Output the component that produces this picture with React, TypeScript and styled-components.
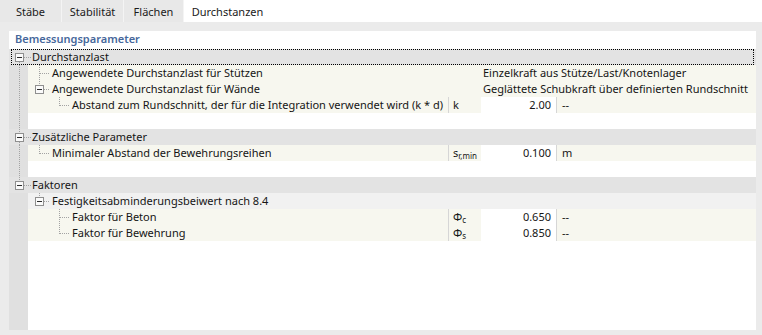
import React from 'react';
import styled, { createGlobalStyle, css } from 'styled-components';

const GlobalStyle = createGlobalStyle`
    html, body {
        margin: 0;
        padding: 0;
        background: #ffffff;
    }
    body {
        font-family: "Noto Sans", "DejaVu Sans", sans-serif;
        font-size: 11px;
        color: #151515;
    }
`;

const Window = styled.div`
    width: 762px;
    height: 335px;
    display: flex;
    flex-direction: column;
    background: #ffffff;
    overflow: hidden;
`;

const TabBar = styled.div`
    display: flex;
    height: 22px;
    flex-shrink: 0;
`;

const Tab = styled.div<{ $active?: boolean; $width: number }>`
    box-sizing: border-box;
    width: ${props => props.$width}px;
    display: flex;
    align-items: center;
    justify-content: center;
    background: ${props => (props.$active ? '#ffffff' : '#e8e8e8')};
    border-right: 1px solid ${props => (props.$active ? '#ffffff' : '#f4f4f4')};
    color: #1a1a1a;
    white-space: nowrap;
`;

const Body = styled.div`
    flex: 1;
    min-height: 0;
    display: flex;
    background: #ebebeb;
    padding: 9px 6px 5px 9px;
`;

const Panel = styled.div`
    flex: 1;
    display: flex;
    flex-direction: column;
    background: #ffffff;
`;

const SectionTitle = styled.div`
    height: 16px;
    line-height: 16px;
    margin-bottom: 2px;
    padding-left: 6px;
    color: #46679b;
    font-weight: 600;
`;

const Tree = styled.div`
    flex: 1;
    background: linear-gradient(to right, #e0e0e0 19px, transparent 19px);
`;

const GroupRow = styled.div<{ $focused?: boolean }>`
    position: relative;
    display: flex;
    align-items: center;
    height: 16px;
    line-height: 16px;
    background: #e3e3e3;
    ${props =>
        props.$focused &&
        css`
            &::after {
                content: '';
                position: absolute;
                top: 0;
                bottom: 0;
                left: 2px;
                right: 2px;
                border: 1px dotted #000000;
            }
        `}
`;

const ItemRow = styled.div`
    display: flex;
    height: 16px;
    line-height: 16px;
`;

const SpacerRow = styled.div`
    display: flex;
    height: 16px;
`;

const ItemBody = styled.div<{ $tone: 'cream' | 'gray' }>`
    flex: 1;
    display: grid;
    grid-template-columns: 420px 33px 75px 1fr;
    background: ${props => (props.$tone === 'gray' ? '#f1f1f1' : '#f7f7ef')};
`;

const LabelCell = styled.div`
    display: flex;
    align-items: center;
    white-space: nowrap;
    overflow: hidden;
`;

const SymbolCell = styled.div<{ $ruled?: boolean }>`
    border-left: 1px solid ${props => (props.$ruled ? '#d6d6d6' : 'transparent')};
    padding-left: 4px;
    white-space: nowrap;

    sub {
        font-size: 8px;
        vertical-align: -2px;
        line-height: 0;
    }
`;

const ValueCell = styled.div`
    background: #ffffff;
    text-align: right;
    padding-right: 5px;
`;

const UnitCell = styled.div`
    border-left: 1px solid #d6d6d6;
    padding-left: 5px;
`;

const SpanCell = styled.div`
    grid-column: 3 / 5;
    padding-left: 2px;
    white-space: nowrap;
`;

const GuideSvg = styled.svg`
    display: block;
    flex-shrink: 0;
`;

const LINE = '#a3a3a3';

const V = ({ x, y1 = 0, y2 = 16 }: { x: number; y1?: number; y2?: number }) => (
    <line x1={x + 0.5} x2={x + 0.5} y1={y1} y2={y2} stroke={LINE} strokeDasharray='1 1' />
);

const H = ({ x1, x2 }: { x1: number; x2: number }) => (
    <line x1={x1} x2={x2} y1={8.5} y2={8.5} stroke={LINE} strokeDasharray='1 1' />
);

const Box = ({ x }: { x: number }) => (
    <g>
        <rect x={x + 0.5} y={4.5} width={8} height={8} fill='#fafafa' stroke='#8f8f8f' />
        <line x1={x + 2} x2={x + 7} y1={8.5} y2={8.5} stroke='#2b2b2b' />
    </g>
);

const RootGuide = ({ root }: { root?: boolean }) => (
    <GuideSvg width={19} height={16}>
        {root && <V x={10} />}
    </GuideSvg>
);

type Branch = 'tee' | 'end' | 'box';

interface GroupSpec {
    kind: 'group';
    label: string;
    focused?: boolean;
    rootTop?: boolean;
    rootBottom?: boolean;
}

interface ItemSpec {
    kind: 'item';
    label: string;
    level: 1 | 2;
    root?: boolean;
    l1?: Branch;
    l2?: Branch;
    tone?: 'cream' | 'gray';
    text?: string;
    symbol?: React.ReactNode;
    value?: string;
    unit?: string;
}

interface SpacerSpec {
    kind: 'spacer';
    root?: boolean;
}

type RowSpec = GroupSpec | ItemSpec | SpacerSpec;

const rows: RowSpec[] = [
    { kind: 'group', label: 'Durchstanzlast', focused: true, rootBottom: true },
    {
        kind: 'item',
        label: 'Angewendete Durchstanzlast für Stützen',
        level: 1,
        root: true,
        l1: 'tee',
        text: 'Einzelkraft aus Stütze/Last/Knotenlager',
    },
    {
        kind: 'item',
        label: 'Angewendete Durchstanzlast für Wände',
        level: 1,
        root: true,
        l1: 'box',
        text: 'Geglättete Schubkraft über definierten Rundschnitt',
    },
    {
        kind: 'item',
        label: 'Abstand zum Rundschnitt, der für die Integration verwendet wird (k * d)',
        level: 2,
        root: true,
        l2: 'end',
        symbol: 'k',
        value: '2.00',
        unit: '--',
    },
    { kind: 'spacer', root: true },
    { kind: 'group', label: 'Zusätzliche Parameter', rootTop: true, rootBottom: true },
    {
        kind: 'item',
        label: 'Minimaler Abstand der Bewehrungsreihen',
        level: 1,
        root: true,
        l1: 'end',
        symbol: (
            <>
                s<sub>r,min</sub>
            </>
        ),
        value: '0.100',
        unit: 'm',
    },
    { kind: 'spacer', root: true },
    { kind: 'group', label: 'Faktoren', rootTop: true },
    {
        kind: 'item',
        label: 'Festigkeitsabminderungsbeiwert nach 8.4',
        level: 1,
        l1: 'box',
        tone: 'gray',
    },
    {
        kind: 'item',
        label: 'Faktor für Beton',
        level: 2,
        l2: 'tee',
        symbol: (
            <>
                Φ<sub>c</sub>
            </>
        ),
        value: '0.650',
        unit: '--',
    },
    {
        kind: 'item',
        label: 'Faktor für Bewehrung',
        level: 2,
        l2: 'end',
        symbol: (
            <>
                Φ<sub>s</sub>
            </>
        ),
        value: '0.850',
        unit: '--',
    },
];

const BranchLines = ({ x, branch }: { x: number; branch?: Branch }) => {
    if (branch === 'tee')
        return (
            <>
                <V x={x} />
                <H x1={x + 1} x2={x + 10} />
            </>
        );
    if (branch === 'end')
        return (
            <>
                <V x={x} y2={9} />
                <H x1={x + 1} x2={x + 10} />
            </>
        );
    if (branch === 'box')
        return (
            <>
                <V x={x} y2={4} />
                <Box x={x - 4} />
                <H x1={x + 5} x2={x + 10} />
            </>
        );
    return null;
};

const GroupHeader = ({ row }: { row: GroupSpec }) => (
    <GroupRow $focused={row.focused}>
        <GuideSvg width={23} height={16}>
            {row.rootTop && <V x={10} y2={4} />}
            {row.rootBottom && <V x={10} y1={13} />}
            <Box x={6} />
            <H x1={15} x2={22} />
        </GuideSvg>
        <span>{row.label}</span>
    </GroupRow>
);

const ParamRow = ({ row }: { row: ItemSpec }) => {
    const hasValue = row.value !== undefined;
    return (
        <ItemRow>
            <RootGuide root={row.root} />
            <ItemBody $tone={row.tone ?? 'cream'}>
                <LabelCell>
                    <GuideSvg width={row.level === 1 ? 24 : 44} height={16}>
                        <BranchLines x={11} branch={row.l1} />
                        <BranchLines x={31} branch={row.l2} />
                    </GuideSvg>
                    <span>{row.label}</span>
                </LabelCell>
                <SymbolCell $ruled={hasValue}>{row.symbol}</SymbolCell>
                {hasValue ? (
                    <>
                        <ValueCell>{row.value}</ValueCell>
                        <UnitCell>{row.unit}</UnitCell>
                    </>
                ) : (
                    <SpanCell>{row.text}</SpanCell>
                )}
            </ItemBody>
        </ItemRow>
    );
};

const tabs = [
    { label: 'Stäbe', width: 62 },
    { label: 'Stabilität', width: 62 },
    { label: 'Flächen', width: 60 },
    { label: 'Durchstanzen', width: 88, active: true },
];

export default function App() {
    return (
        <>
            <GlobalStyle />
            <Window>
                <TabBar>
                    {tabs.map(tab => (
                        <Tab key={tab.label} $width={tab.width} $active={tab.active}>
                            {tab.label}
                        </Tab>
                    ))}
                </TabBar>
                <Body>
                    <Panel>
                        <SectionTitle>Bemessungsparameter</SectionTitle>
                        <Tree>
                            {rows.map((row, i) => {
                                if (row.kind === 'group') return <GroupHeader key={i} row={row} />;
                                if (row.kind === 'item') return <ParamRow key={i} row={row} />;
                                return (
                                    <SpacerRow key={i}>
                                        <RootGuide root={row.root} />
                                    </SpacerRow>
                                );
                            })}
                        </Tree>
                    </Panel>
                </Body>
            </Window>
        </>
    );
}
